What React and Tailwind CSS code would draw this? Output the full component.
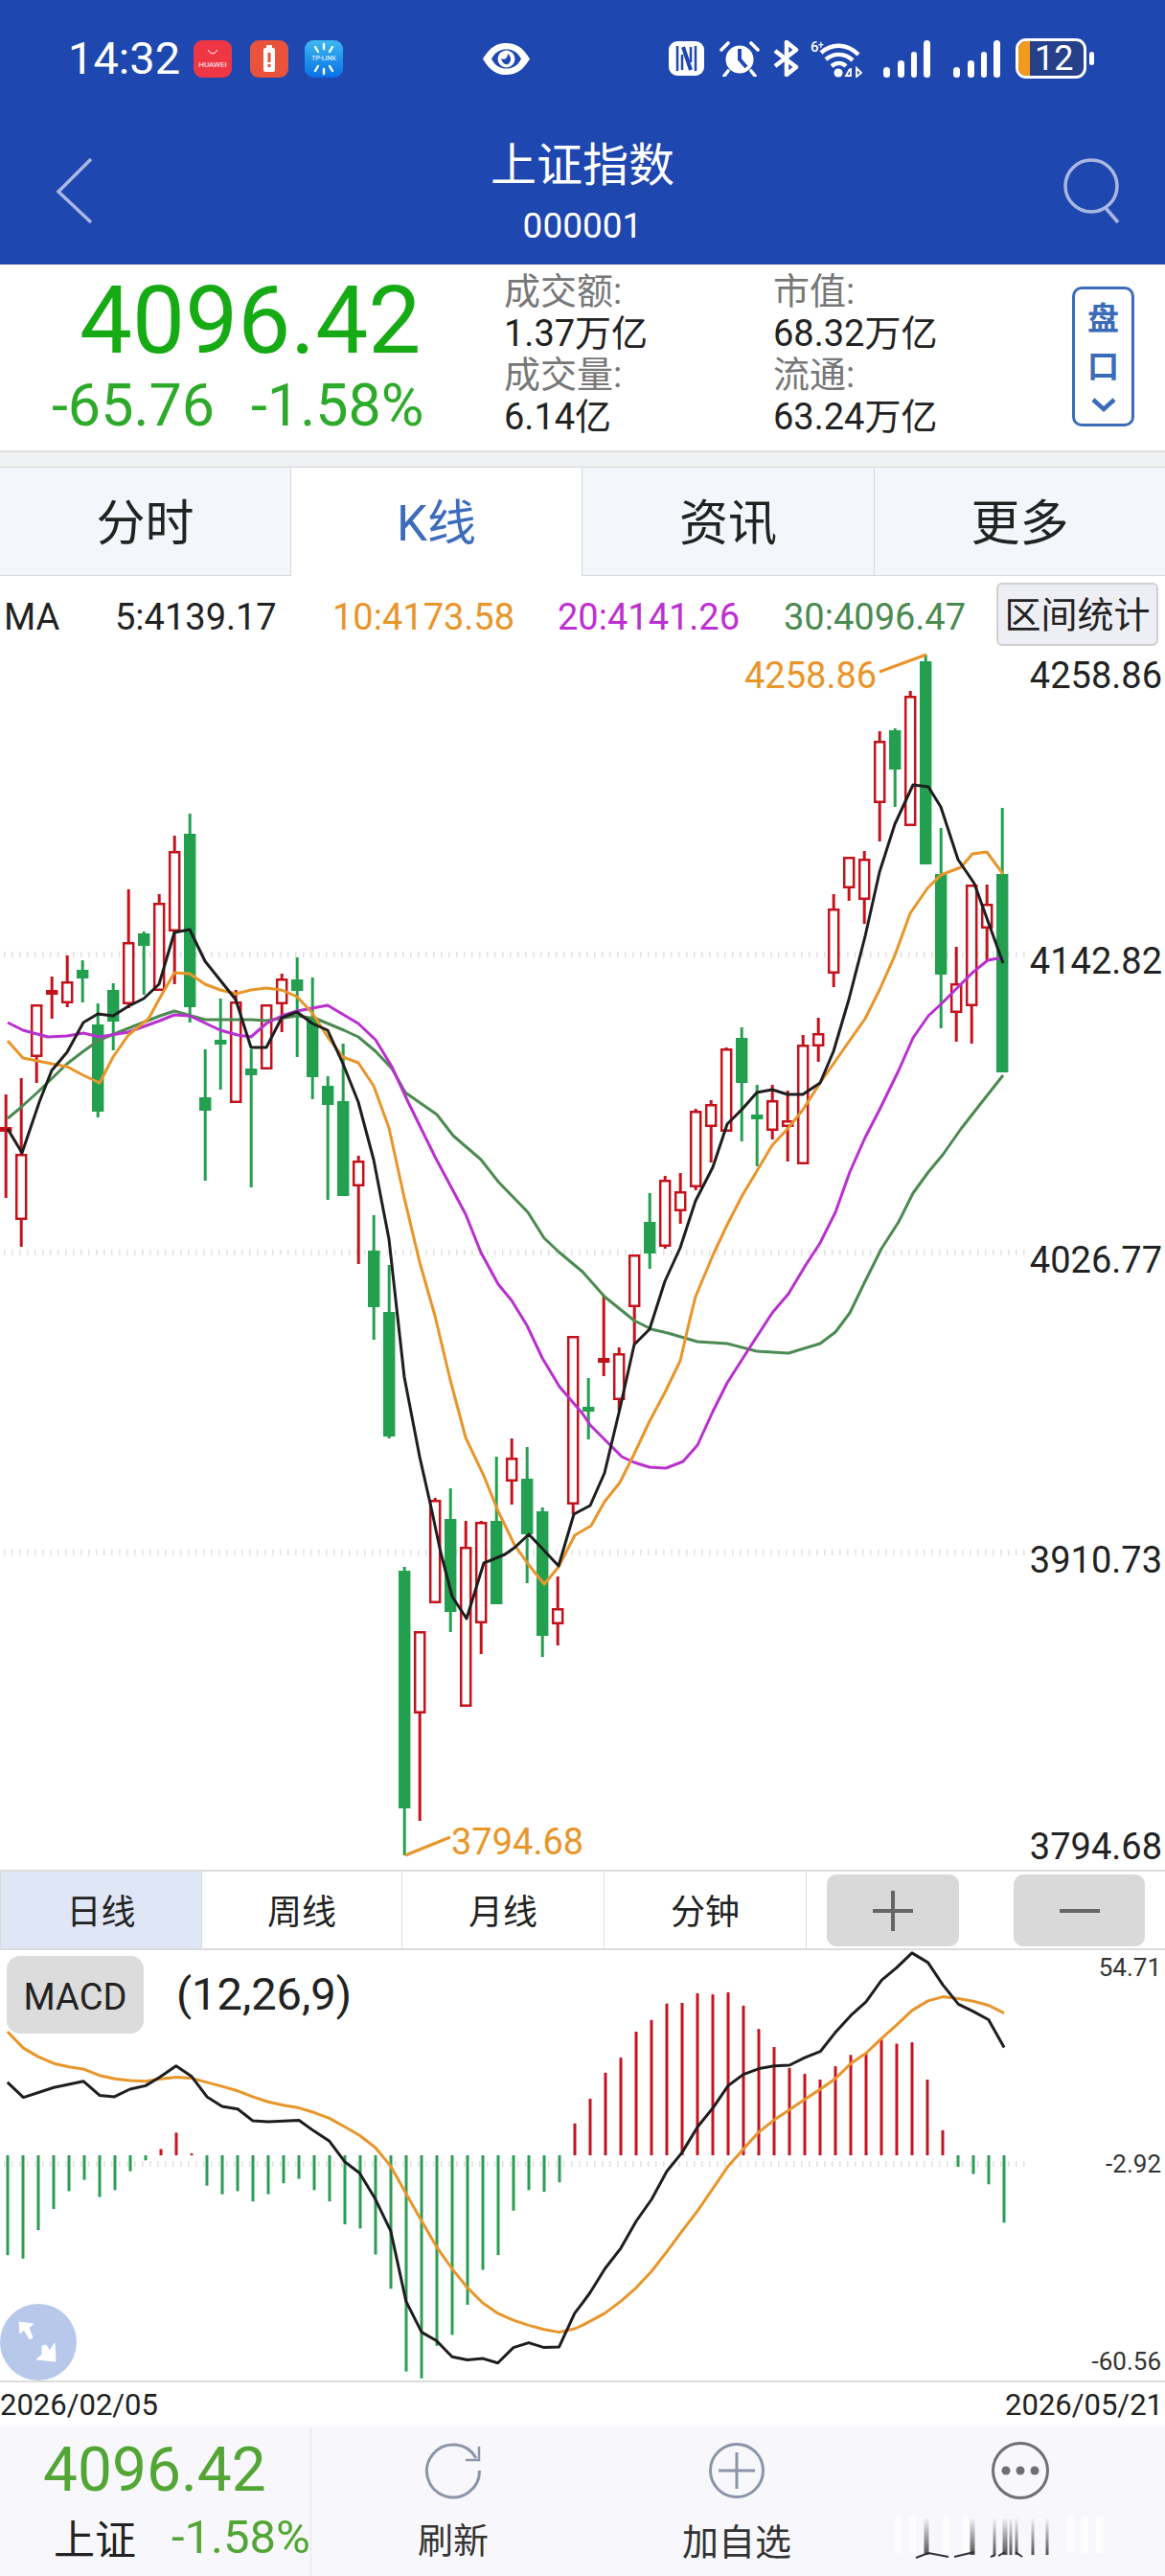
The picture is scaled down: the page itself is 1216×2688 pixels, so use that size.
import { useId } from 'react'

const GREEN = '#22a04f'
const RED = '#c4121c'
const ORANGE = '#e8952a'
const PURPLE = '#b930cf'
const MA30 = '#4b8a50'
const BLACK = '#1e1e1e'

// [color, high, bodyTop, bodyBottom, low] — page coordinates, x = 6.2 + 16 * index
const CANDLES = [
  ['r', 1142, 1176, 1181, 1250], ['r', 1125, 1204, 1273, 1301], ['r', 1048, 1048, 1103, 1130], ['r', 1019, 1033, 1038, 1063],
  ['r', 997, 1024, 1047, 1051], ['g', 1002, 1012, 1021, 1046], ['g', 1047, 1069, 1160, 1166], ['g', 1026, 1033, 1066, 1096],
  ['r', 928, 983, 1048, 1052], ['g', 972, 974, 987, 1038], ['r', 933, 942, 1034, 1034], ['r', 872, 888, 972, 1027],
  ['g', 849, 870, 1051, 1067], ['g', 1095, 1145, 1159, 1232], ['g', 1042, 1085, 1090, 1137], ['r', 1033, 1045, 1151, 1151],
  ['g', 1095, 1115, 1122, 1239], ['r', 1048, 1048, 1116, 1116], ['r', 1016, 1021, 1048, 1077], ['g', 999, 1022, 1034, 1103],
  ['g', 1020, 1062, 1124, 1147], ['g', 1123, 1133, 1153, 1252], ['g', 1089, 1149, 1248, 1248], ['r', 1206, 1211, 1238, 1319],
  ['g', 1268, 1305, 1364, 1398], ['g', 1320, 1369, 1499, 1501], ['g', 1635, 1639, 1887, 1936], ['r', 1702, 1702, 1788, 1900],
  ['r', 1563, 1565, 1673, 1673], ['g', 1553, 1585, 1682, 1703], ['r', 1587, 1614, 1781, 1781], ['r', 1587, 1588, 1694, 1726],
  ['g', 1520, 1587, 1674, 1674], ['r', 1501, 1521, 1546, 1570], ['g', 1510, 1543, 1601, 1652], ['g', 1573, 1577, 1707, 1729],
  ['r', 1645, 1678, 1695, 1717], ['r', 1394, 1394, 1570, 1580], ['g', 1438, 1468, 1473, 1502], ['r', 1352, 1417, 1422, 1436],
  ['r', 1406, 1412, 1461, 1472], ['r', 1309, 1309, 1364, 1402], ['g', 1245, 1275, 1308, 1324], ['r', 1227, 1231, 1301, 1303],
  ['r', 1224, 1243, 1264, 1277], ['r', 1157, 1159, 1239, 1242], ['r', 1148, 1152, 1176, 1213], ['r', 1093, 1094, 1181, 1181],
  ['g', 1072, 1083, 1130, 1191], ['g', 1132, 1163, 1168, 1217], ['r', 1132, 1148, 1180, 1189], ['r', 1138, 1169, 1176, 1212],
  ['r', 1080, 1090, 1215, 1215], ['r', 1062, 1078, 1092, 1108], ['r', 933, 948, 1016, 1030], ['r', 894, 894, 927, 940],
  ['r', 888, 896, 939, 964], ['r', 763, 773, 838, 878], ['g', 760, 762, 803, 842], ['r', 721, 726, 862, 862],
  ['g', 683, 690, 902, 902], ['g', 864, 912, 1017, 1073], ['r', 988, 1026, 1057, 1087], ['r', 923, 923, 1050, 1089],
  ['r', 923, 943, 969, 1003], ['g', 843, 912, 1119, 1119],
]

const MA5 = [[8,1178],[23,1203],[41,1150],[54,1117],[70,1098],[87,1067],[102,1058],[118,1060],[134,1050],[150,1042],[166,1027],[182,973],[198,970],[214,1003],[230,1023],[246,1043],[262,1093],[278,1093],[294,1062],[310,1056],[326,1068],[342,1075],[358,1110],[374,1150],[390,1210],[406,1293],[422,1437],[438,1520],[450,1573],[460,1620],[472,1666],[487,1689],[505,1631],[527,1622],[537,1615],[552,1601],[583,1634],[599,1580],[616,1571],[631,1537],[647,1470],[662,1403],[678,1387],[694,1337],[710,1302],[726,1253],[744,1218],[759,1173],[775,1157],[790,1140],[806,1137],[822,1142],[838,1142],[856,1130],[870,1097],[886,1043],[903,977],[918,910],[934,860],[953,819],[969,821],[982,842],[1000,897],[1017,922],[1047,1005]]
const MA10 = [[8,1086],[24,1104],[54,1110],[70,1113],[87,1122],[104,1130],[118,1103],[134,1080],[155,1063],[166,1043],[182,1015],[198,1016],[214,1027],[230,1033],[246,1037],[262,1033],[278,1031],[294,1033],[310,1040],[326,1057],[342,1082],[358,1103],[374,1109],[390,1133],[406,1177],[422,1250],[438,1317],[454,1373],[470,1440],[486,1500],[505,1540],[520,1577],[537,1612],[552,1633],[568,1653],[583,1635],[600,1602],[617,1592],[631,1567],[647,1547],[662,1517],[678,1483],[694,1453],[710,1420],[720,1377],[726,1353],[744,1310],[759,1278],[775,1247],[790,1222],[806,1195],[822,1178],[838,1158],[856,1130],[870,1110],[886,1087],[903,1063],[918,1033],[934,997],[950,953],[968,927],[982,913],[1003,905],[1015,891],[1030,889],[1047,912]]
const MA20 = [[8,1067],[24,1075],[50,1082],[70,1081],[87,1078],[104,1082],[134,1077],[167,1065],[182,1059],[198,1060],[230,1075],[248,1080],[262,1082],[278,1068],[294,1060],[310,1055],[342,1049],[374,1068],[392,1085],[409,1113],[426,1150],[454,1207],[486,1267],[502,1307],[520,1340],[534,1357],[550,1383],[566,1417],[584,1447],[608,1475],[616,1487],[639,1510],[649,1520],[662,1526],[678,1531],[695,1532],[713,1525],[728,1508],[744,1473],[759,1443],[782,1407],[806,1370],[823,1350],[841,1320],[856,1297],[872,1265],[887,1223],[903,1187],[918,1158],[938,1117],[953,1083],[969,1060],[982,1048],[1000,1030],[1015,1015],[1031,1002],[1047,999]]
const MA30_PTS = [[8,1167],[19,1158],[39,1140],[70,1110],[87,1097],[104,1085],[134,1073],[167,1060],[182,1055],[214,1064],[262,1064],[278,1065],[310,1060],[330,1063],[359,1075],[374,1082],[392,1097],[409,1115],[423,1140],[456,1163],[473,1185],[502,1210],[520,1233],[551,1265],[568,1292],[584,1307],[608,1327],[631,1353],[662,1378],[680,1387],[697,1391],[728,1400],[759,1402],[790,1410],[823,1412],[856,1402],[872,1390],[887,1370],[903,1337],[920,1303],[938,1275],[953,1245],[969,1223],[984,1205],[1003,1178],[1017,1160],[1047,1122]]

// MACD traces read off two crops: x scale 2.579, y scale 2.8 from y=1930
const fromLeft = (pts) => pts.map(([x, y]) => [x / 2.579, 1930 + y / 2.8])
const fromRight = (pts) => pts.map(([x, y]) => [608 + x / 2.579, 1930 + y / 2.8])
const DIF = [
  ...fromLeft([[20,680],[63,724],[145,695],[225,677],[268,718],[308,722],[350,700],[392,690],[430,665],[474,632],[515,662],[557,722],[598,750],[640,758],[680,792],[722,795],[805,791],[845,822],[887,852],[928,912],[968,945],[1010,1020],[1052,1115],[1093,1320],[1135,1410],[1175,1435],[1217,1482],[1258,1491],[1300,1487],[1340,1500],[1382,1455],[1423,1441],[1465,1455],[1505,1453],[1547,1355]]),
  ...fromRight([[0,1325],[20,1295],[60,1225],[103,1165],[145,1085],[186,1022],[227,940],[268,885],[310,810],[351,755],[392,690],[433,657],[475,640],[516,632],[557,630],[598,608],[640,590],[680,535],[722,485],[763,445],[805,382],[846,345],[887,302],[930,330],[970,395],[1012,452],[1052,473],[1093,497],[1135,578]]),
]
const DEA = [
  ...fromLeft([[20,532],[63,580],[103,605],[145,625],[186,635],[227,642],[268,660],[310,670],[350,675],[392,677],[433,670],[475,665],[516,668],[557,680],[598,692],[640,705],[680,722],[722,737],[763,747],[805,755],[845,768],[887,785],[928,810],[968,835],[1010,870],[1052,925],[1093,1005],[1135,1085],[1175,1160],[1217,1225],[1258,1280],[1300,1325],[1340,1355],[1382,1375],[1423,1390],[1465,1402],[1505,1410],[1547,1400]]),
  ...fromRight([[0,1390],[60,1355],[103,1320],[145,1280],[186,1232],[227,1175],[268,1115],[310,1055],[351,990],[392,925],[433,875],[475,825],[516,790],[557,760],[598,730],[640,700],[680,670],[722,625],[763,595],[805,552],[846,512],[887,470],[930,442],[970,430],[1012,435],[1052,443],[1093,455],[1135,478]]),
]
// bar end in crop y, one per day; below 893 is a red bar, above it a green one
const HIST = [1185,1195,1112,1050,998,965,1015,995,940,908,875,827,888,982,1007,998,1028,1007,975,962,995,1028,1095,1107,1183,1283,1525,1545,1450,1418,1330,1228,1185,1055,995,1000,972,800,728,652,608,532,498,450,448,420,423,417,456,524,577,638,655,672,633,600,597,555,567,563,672,820,927,948,978,1090]

const toPoints = (pts) => pts.map(([x, y]) => `${x.toFixed(1)},${y.toFixed(1)}`).join(' ')

function Line({ pts, color, width = 3 }) {
  return <polyline points={toPoints(pts)} fill="none" stroke={color} strokeWidth={width} strokeLinejoin="round" />
}

function Candle({ c, i }) {
  const [kind, high, top, bottom, low] = c
  const x = 6.2 + 16 * i
  const color = kind === 'g' ? GREEN : RED
  const solid = kind === 'g' || bottom - top <= 6
  return (
    <g>
      <line x1={x} x2={x} y1={high} y2={low} stroke={color} strokeWidth="3" />
      {solid ? (
        <rect x={x - 6.2} y={top} width="12.4" height={bottom - top} fill={color} />
      ) : (
        <rect x={x - 5} y={top + 1.25} width="10" height={bottom - top - 2.5} fill="#fff" stroke={color} strokeWidth="2.5" />
      )}
    </g>
  )
}

function GridLine({ y }) {
  return <line x1="4" x2="1070" y1={y} y2={y} stroke="#e2e2e2" strokeWidth="6" strokeDasharray="1.5 6.5" />
}

function KChart() {
  return (
    <div className="relative h-[1271px]">
      <svg className="block" width="1216" height="1271" viewBox="0 680 1216 1271">
        <GridLine y={996} />
        <GridLine y={1307} />
        <GridLine y={1620} />
        {CANDLES.map((c, i) => <Candle key={i} c={c} i={i} />)}
        <Line pts={MA30_PTS} color={MA30} />
        <Line pts={MA20} color={PURPLE} />
        <Line pts={MA10} color={ORANGE} />
        <Line pts={MA5} color={BLACK} />
        <polyline points="918,701 967,683" fill="none" stroke={ORANGE} strokeWidth="3" />
        <polyline points="423,1936 470,1917" fill="none" stroke={ORANGE} strokeWidth="3" />
      </svg>
      <span className="absolute left-[777px] top-[6px] text-[38px] leading-[38px] text-[#e8952a]">4258.86</span>
      <span className="absolute left-[471px] top-[1223px] text-[38px] leading-[38px] text-[#e8952a]">3794.68</span>
      <span className="absolute right-[3px] top-[6px] text-[38px] leading-[38px] text-[#222]">4258.86</span>
      <span className="absolute right-[3px] top-[304px] text-[38px] leading-[38px] text-[#222]">4142.82</span>
      <span className="absolute right-[3px] top-[616px] text-[38px] leading-[38px] text-[#222]">4026.77</span>
      <span className="absolute right-[3px] top-[929px] text-[38px] leading-[38px] text-[#222]">3910.73</span>
      <span className="absolute right-[3px] top-[1228px] text-[38px] leading-[38px] text-[#222]">3794.68</span>
    </div>
  )
}

function MacdChart() {
  const zero = 2249
  return (
    <div className="relative h-[449px] overflow-hidden">
      <svg className="block" width="1216" height="449" viewBox="0 2035 1216 449">
        <GridLine y={2258} />
        {HIST.map((v, i) => {
          const y = 1930 + v / 2.8
          const x = 8 + 16 * i
          return <line key={i} x1={x} x2={x} y1={zero} y2={y} stroke={y < zero ? '#c4141f' : '#2a9d56'} strokeWidth="3" />
        })}
        <Line pts={DEA} color={ORANGE} />
        <Line pts={DIF} color={BLACK} />
      </svg>
      <div className="absolute left-[7px] top-[6px] flex h-[81px] w-[143px] items-center justify-center rounded-[14px] bg-[#dcdcdc] pt-[5px] text-[38px] text-[#222]">MACD</div>
      <span className="absolute left-[184px] top-[21px] text-[47px] leading-[50px] text-[#222]">(12,26,9)</span>
      <span className="absolute right-[4px] top-[2px] text-[26px] leading-[32px] text-[#333]">54.71</span>
      <span className="absolute right-[4px] top-[207px] text-[26px] leading-[32px] text-[#333]">-2.92</span>
      <span className="absolute right-[4px] top-[413px] text-[26px] leading-[32px] text-[#333]">-60.56</span>
      <div className="absolute left-0 top-[369px] flex h-[80px] w-[80px] items-center justify-center rounded-full bg-[#b8c8ea]">
        <svg width="46" height="46" viewBox="0 0 46 46" fill="#fff" stroke="#fff" strokeWidth="1">
          <path d="M3 2 L18 4 L13 8 L17 18 L14 20 L8 10 L4 14 Z" />
          <path d="M41 43 L21 41 L27 36 L27 27 L31 26 L35 32 L40 24 Z" />
        </svg>
      </div>
    </div>
  )
}

function HuaweiIcon() {
  return (
    <div className="flex h-[39px] w-[40px] flex-col items-center justify-center rounded-[9px] bg-[#ee3645] text-[8px] leading-[9px] text-white">
      <svg width="14" height="7" viewBox="0 0 14 7" fill="none" stroke="#fff" strokeWidth="1"><path d="M2 1 Q7 9 12 1" /></svg>
      <span className="mt-[5px]">HUAWEI</span>
    </div>
  )
}

function BatteryAppIcon() {
  return (
    <div className="flex h-[39px] w-[40px] items-center justify-center rounded-[9px] bg-[#e9533b]">
      <svg width="14" height="28" viewBox="0 0 14 28">
        <rect x="4" y="0" width="6" height="3" fill="#fff" />
        <rect x="1" y="3" width="12" height="25" rx="2" fill="#fff" />
        <rect x="5.5" y="8" width="3" height="10" fill="#e9533b" />
        <rect x="5.5" y="20" width="3" height="3" fill="#e9533b" />
      </svg>
    </div>
  )
}

function TpLinkIcon() {
  return (
    <div className="relative flex h-[39px] w-[40px] items-center justify-center rounded-[9px] bg-gradient-to-b from-[#3db8f2] to-[#0b6fe6] text-[7px] text-white">
      <svg className="absolute left-0 top-0" width="40" height="39" viewBox="0 0 40 39" stroke="#fff" strokeWidth="2.4" strokeLinecap="round">
        <path d="M20 4 V9 M11 7 L14 12 M29 7 L26 12 M20 30 V35 M11 32 L14 27 M29 32 L26 27" />
      </svg>
      <span className="relative">TP-LINK</span>
    </div>
  )
}

function EyeIcon() {
  return (
    <svg width="53" height="35" viewBox="0 0 53 35">
      <path d="M2 17.5 C10 4 18 1 26.5 1 C35 1 43 4 51 17.5 C43 31 35 34 26.5 34 C18 34 10 31 2 17.5 Z" fill="#fff" />
      <path d="M11 17.5 C15 10 20 7.5 26.5 7.5 C33 7.5 38 10 42 17.5 C38 25 33 27.5 26.5 27.5 C20 27.5 15 25 11 17.5 Z" fill="#1f47b0" />
      <circle cx="26.5" cy="17.5" r="9" fill="#fff" />
      <path d="M21 17 C24 19 28 17 28 12 C32 15 32 21 28 23 C25 24 22 21 21 17 Z" fill="#1f47b0" />
    </svg>
  )
}

function NfcIcon() {
  return (
    <svg width="37" height="36" viewBox="0 0 37 36">
      <rect width="37" height="36" rx="9" fill="#fff" />
      <path d="M9 5 V31 M28 5 V31" stroke="#1f47b0" strokeWidth="2.5" fill="none" />
      <path d="M15 6 L23 30" stroke="#1f47b0" strokeWidth="4" fill="none" />
      <path d="M14 30 V14 M23 6 V22" stroke="#1f47b0" strokeWidth="2.5" fill="none" />
    </svg>
  )
}

function AlarmIcon() {
  return (
    <svg width="42" height="38" viewBox="0 0 42 38">
      <circle cx="21" cy="20" r="14.5" fill="#fff" />
      <path d="M21 9 V20 L28 28" stroke="#1f47b0" strokeWidth="4" fill="none" />
      <path d="M2 10 L9 3 M40 10 L33 3 M9 32 L5 37 M33 32 L37 37" stroke="#fff" strokeWidth="3.6" strokeLinecap="round" fill="none" />
    </svg>
  )
}

function BluetoothIcon() {
  return (
    <svg width="27" height="38" viewBox="0 0 27 38" fill="none" stroke="#fff" strokeWidth="4.5">
      <path d="M2 11 L24 28 L14 36 V2 L24 10 L2 27" strokeLinejoin="round" />
    </svg>
  )
}

function WifiIcon() {
  return (
    <svg width="56" height="40" viewBox="0 0 56 40" fill="none">
      <path d="M11 14 C22 4 38 4 50 16" stroke="#fff" strokeWidth="4.4" />
      <path d="M16 21 C24 14 36 14 44 22" stroke="#fff" strokeWidth="4.4" />
      <path d="M22 28 C27 24 33 24 37 28" stroke="#fff" strokeWidth="4.4" />
      <circle cx="29" cy="35" r="4.5" fill="#fff" />
      <path d="M41 31 L37 38 H42 M42 30 V39 M48 30 V39 L53 35 Z" stroke="#fff" strokeWidth="1.8" />
      <text x="0" y="13" fill="#fff" fontSize="15" fontFamily="Roboto" fontWeight="500">6</text>
      <text x="8" y="9" fill="#fff" fontSize="10" fontFamily="Roboto" fontWeight="500">+</text>
    </svg>
  )
}

function SignalIcon() {
  return (
    <svg width="49" height="39" viewBox="0 0 49 39" fill="#fff">
      <rect x="0" y="28" width="7" height="11" rx="3.5" />
      <rect x="15" y="21" width="7" height="18" rx="3.5" />
      <rect x="29" y="12" width="6" height="27" rx="3" />
      <rect x="42" y="0" width="7" height="39" rx="3.5" />
    </svg>
  )
}

function BatteryIcon() {
  return (
    <div className="flex items-center">
      <div className="relative flex h-[42px] w-[74px] items-center overflow-hidden rounded-[11px] border-[3px] border-white bg-[#26408a] text-[36px] leading-none text-white">
        <div className="h-full w-[12px] bg-[#f29a1e]" />
        <span className="ml-[5px]">12</span>
      </div>
      <div className="ml-[3px] h-[14px] w-[5px] rounded-full bg-white" />
    </div>
  )
}

function TopBar() {
  return (
    <header className="h-[276px] bg-[#1f47b0] text-white">
      <div className="flex h-[122px] items-center pl-[71px]">
        <span className="w-[131px] text-[47px]">14:32</span>
        <HuaweiIcon />
        <div className="ml-[19px]"><BatteryAppIcon /></div>
        <div className="ml-[17px]"><TpLinkIcon /></div>
        <div className="ml-[144px]"><EyeIcon /></div>
        <div className="ml-[143px]"><NfcIcon /></div>
        <div className="ml-[16px]"><AlarmIcon /></div>
        <div className="ml-[14px]"><BluetoothIcon /></div>
        <div className="ml-[12px]"><WifiIcon /></div>
        <div className="ml-[20px]"><SignalIcon /></div>
        <div className="ml-[24px]"><SignalIcon /></div>
        <div className="ml-[16px]"><BatteryIcon /></div>
      </div>
      <div className="relative flex flex-col items-center">
        <svg className="absolute left-[58px] top-[42px]" width="40" height="70" viewBox="0 0 40 70" fill="none" stroke="#a9b8e2" strokeWidth="3.5">
          <path d="M37 2 L3 36 L37 68" />
        </svg>
        <span className="mt-[23px] h-[56px] text-[48px] leading-[56px]">上证指数</span>
        <span className="mt-[13px] text-[37px] leading-[44px]">000001</span>
        <svg className="absolute right-[46px] top-[40px]" width="62" height="72" viewBox="0 0 62 72" fill="none" stroke="#a9b8e2" strokeWidth="3.5">
          <circle cx="31" cy="32" r="27" />
          <path d="M46 55 L59 70" />
        </svg>
      </div>
    </header>
  )
}

function Quote() {
  return (
    <section className="flex h-[194px] bg-white">
      <div className="w-[526px]">
        <div className="h-[118px] pl-[83px] text-[98px] leading-[118px] text-[#16ab14]">4096.42</div>
        <div className="flex h-[56px] pl-[54px] text-[61px] leading-[58px] text-[#2eaa2a]">
          <span className="w-[208px]">-65.76</span>
          <span>-1.58%</span>
        </div>
      </div>
      <div className="w-[281px] pt-[7px] text-[38px] leading-[43.5px] text-[#222]">
        <div className="text-[#777]">成交额:</div>
        <div>1.37万亿</div>
        <div className="text-[#777]">成交量:</div>
        <div>6.14亿</div>
      </div>
      <div className="w-[312px] pt-[7px] text-[38px] leading-[43.5px] text-[#222]">
        <div className="text-[#777]">市值:</div>
        <div>68.32万亿</div>
        <div className="text-[#777]">流通:</div>
        <div>63.24万亿</div>
      </div>
      <div className="mt-[23px] flex h-[146px] w-[65px] flex-col items-center rounded-[10px] border-[3px] border-[#3b6cb8] pt-[6px] text-[33px] font-bold leading-[50px] text-[#3b6cb8]">
        <span>盘</span>
        <span>口</span>
        <svg className="mt-[7px]" width="26" height="15" viewBox="0 0 26 15" fill="none" stroke="#3b6cb8" strokeWidth="4.5">
          <path d="M2 2 L13 12 L24 2" />
        </svg>
      </div>
    </section>
  )
}

function Tabs() {
  return (
    <nav className="flex h-[114px] border-t border-[#d6d9dc] text-[51px] text-[#222]">
      <div className="flex w-[304px] items-center justify-center border-b border-r border-[#d6d9dc] bg-[#f3f6fa] pt-[6px]">分时</div>
      <div className="flex w-[303px] items-center justify-center bg-white pt-[6px] text-[#3d6cba]">K线</div>
      <div className="flex w-[305px] items-center justify-center border-b border-l border-[#d6d9dc] bg-[#f3f6fa] pt-[6px]">资讯</div>
      <div className="flex w-[304px] items-center justify-center border-b border-l border-[#d6d9dc] bg-[#f3f6fa] pt-[6px]">更多</div>
    </nav>
  )
}

function MaRow() {
  return (
    <div className="flex h-[79px] pl-[4px] pt-[7px] text-[38px] leading-[72px]">
      <span className="w-[116px] text-[#222]">MA</span>
      <span className="w-[227px] text-[#222]">5:4139.17</span>
      <span className="w-[235px] text-[#e8952a]">10:4173.58</span>
      <span className="w-[236px] text-[#bd2fd2]">20:4141.26</span>
      <span className="w-[222px] text-[#4b8a50]">30:4096.47</span>
      <button className="h-[66px] w-[169px] rounded-[6px] border-2 border-[#d0d0d4] bg-[#eeeff5] text-[38px] leading-[65px] text-[#222]">区间统计</button>
    </div>
  )
}

function Periods() {
  return (
    <div className="flex h-[84px] border-y-2 border-[#dcdcdc] text-[36px] text-[#222]">
      <div className="flex w-[211px] items-center justify-center border-l border-r border-[#dcdcdc] bg-[#dfe6f5] pt-[6px]">日线</div>
      <div className="flex w-[209px] items-center justify-center border-r border-[#dcdcdc] pt-[6px]">周线</div>
      <div className="flex w-[211px] items-center justify-center border-r border-[#dcdcdc] pt-[6px]">月线</div>
      <div className="flex w-[211px] items-center justify-center border-r border-[#dcdcdc] pt-[6px]">分钟</div>
      <button className="ml-[21px] mt-[3px] flex h-[75px] w-[138px] items-center justify-center rounded-[10px] bg-[#d9d9d9]">
        <svg width="42" height="42" viewBox="0 0 42 42" stroke="#666" strokeWidth="4"><path d="M0 21 H42 M21 0 V42" /></svg>
      </button>
      <button className="ml-[57px] mt-[3px] flex h-[75px] w-[137px] items-center justify-center rounded-[10px] bg-[#d9d9d9]">
        <svg width="42" height="42" viewBox="0 0 42 42" stroke="#666" strokeWidth="4"><path d="M0 21 H42" /></svg>
      </button>
    </div>
  )
}

// the lower half of the last label in the reference is smeared upward by the image's watermark
function SmearedLabel() {
  const id = useId()
  const bars = [[1003, 5], [1051, 5], [1074, 3], [1085, 5], [1091, 3], [1097, 3], [1114, 3], [1129, 3]]
  return (
    <svg width="240" height="60" viewBox="960 2620 240 60" className="block">
      <defs>
        <linearGradient id={id} x1="0" x2="0" y1="0" y2="1">
          <stop offset="0" stopColor="#333" stopOpacity="0.03" />
          <stop offset="1" stopColor="#333" stopOpacity="0.85" />
        </linearGradient>
      </defs>
      {[970, 985, 1020, 1040, 1150, 1165, 1180].map((x) => (
        <rect key={x} x={x} y="2626" width="7" height="38" fill="#fff" opacity="0.7" />
      ))}
      {bars.map(([x, w]) => (
        <rect key={x} x={x - w / 2} y="2628" width={w} height="38" fill={`url(#${id})`} />
      ))}
      <path d="M992 2669 L1005 2664 L1026 2668 M1032 2668 L1053 2663 M1070 2668 L1075 2666 M1078 2667 L1085 2663 M1096 2663 L1103 2668" fill="none" stroke="#333" strokeWidth="2" />
    </svg>
  )
}

function BottomBar() {
  return (
    <footer className="flex h-[156px] bg-[#f8f8fc]">
      <div className="w-[325px] border-r border-[#e6e6ea] pt-[5px]">
        <div className="h-[80px] pl-[45px] text-[64px] leading-[82px] text-[#53a636]">4096.42</div>
        <div className="flex h-[62px] pl-[56px]">
          <span className="w-[124px] pt-[3px] text-[43px] leading-[62px] text-[#222]">上证</span>
          <span className="text-[49px] leading-[62px] text-[#53a636]">-1.58%</span>
        </div>
      </div>
      <div className="flex w-[296px] flex-col items-center pt-[16px]">
        <svg width="60" height="60" viewBox="0 0 60 60" fill="none" stroke="#8c94a8" strokeWidth="3">
          <path d="M54 17 A27.5 27.5 0 1 0 57.5 30" />
          <path d="M57 5 V19 H43" strokeWidth="2.5" />
        </svg>
        <span className="mt-[21px] h-[48px] text-[37px] leading-[48px] text-[#333]">刷新</span>
      </div>
      <div className="flex w-[296px] flex-col items-center pt-[16px]">
        <svg width="60" height="60" viewBox="0 0 60 60" fill="none" stroke="#8c94a8" strokeWidth="3">
          <circle cx="30" cy="30" r="27.5" />
          <path d="M11 30 H49 M30 11 V49" />
        </svg>
        <span className="mt-[21px] h-[48px] text-[38px] leading-[48px] text-[#333]">加自选</span>
      </div>
      <div className="flex w-[295px] flex-col items-center pt-[16px]">
        <svg width="62" height="60" viewBox="0 0 62 60" fill="none" stroke="#707070" strokeWidth="3">
          <circle cx="31" cy="30" r="28.5" />
          <circle cx="16" cy="30" r="4.5" fill="#707070" stroke="none" />
          <circle cx="31" cy="30" r="4.5" fill="#707070" stroke="none" />
          <circle cx="46" cy="30" r="4.5" fill="#707070" stroke="none" />
        </svg>
        <div className="mt-[12px] self-start pl-[7px]"><SmearedLabel /></div>
      </div>
    </footer>
  )
}

export default function App() {
  return (
    <div className="w-[1216px] bg-white font-['Roboto','Noto_Sans_CJK_SC',sans-serif]">
      <TopBar />
      <Quote />
      <div className="h-[17px] border-t-2 border-[#dcdddf] bg-[#eef0f1]" />
      <Tabs />
      <MaRow />
      <KChart />
      <Periods />
      <MacdChart />
      <div className="flex h-[48px] items-center justify-between border-t-2 border-[#dcdcdc] pr-[2px] pt-[2px] text-[31px] text-[#222]">
        <span>2026/02/05</span>
        <span>2026/05/21</span>
      </div>
      <BottomBar />
    </div>
  )
}
